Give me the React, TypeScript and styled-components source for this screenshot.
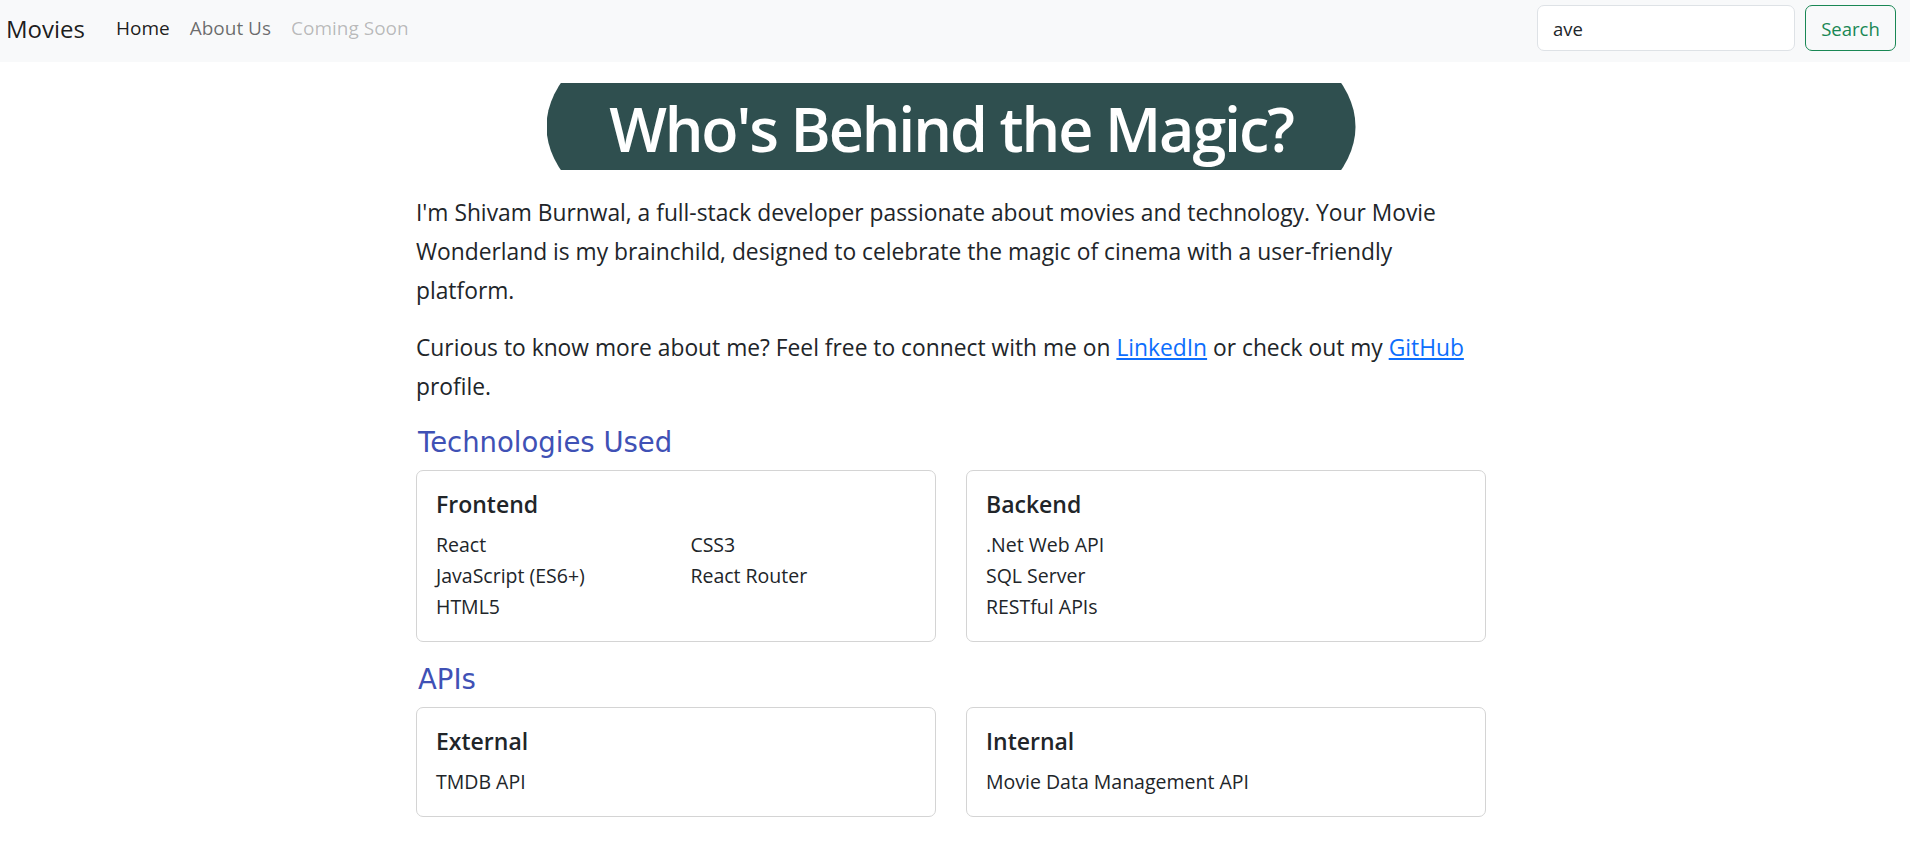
import React from "react";
import styled, { createGlobalStyle } from "styled-components";

const GlobalStyle = createGlobalStyle`
  *, *::before, *::after { box-sizing: border-box; }
  body {
    margin: 0;
    background: #ffffff;
    color: #212529;
    font-family: "Open Sans", "Noto Sans", sans-serif;
  }
`;

const NavBar = styled.nav`
  display: flex;
  align-items: center;
  justify-content: space-between;
  height: 62px;
  background: #f8f9fa;
  padding: 0 14px 0 6px;
`;

const NavLeft = styled.div`
  display: flex;
  align-items: center;
  margin-bottom: 5px;
`;

const Brand = styled.a`
  font-size: 24px;
  color: rgba(0, 0, 0, 0.9);
  text-decoration: none;
  margin-right: 21px;
  line-height: 1.5;
`;

const NavLink = styled.a<{ $state: "active" | "normal" | "disabled" }>`
  font-size: 19px;
  line-height: 1.5;
  padding: 0 10px;
  text-decoration: none;
  color: ${(p) =>
    p.$state === "active"
      ? "rgba(0,0,0,0.9)"
      : p.$state === "disabled"
      ? "rgba(0,0,0,0.27)"
      : "rgba(0,0,0,0.58)"};
`;

const SearchForm = styled.form`
  display: flex;
  gap: 10px;
  align-self: flex-start;
  margin-top: 5px;
`;

const SearchInput = styled.input`
  width: 258px;
  height: 46px;
  border: 1px solid #dee2e6;
  border-radius: 7px;
  background: #ffffff;
  padding: 0 15px;
  font-family: "Open Sans", sans-serif;
  font-size: 18.5px;
  color: #212529;
  outline: none;
`;

const SearchButton = styled.button`
  width: 91px;
  height: 46px;
  border: 1px solid #198754;
  border-radius: 7px;
  background: transparent;
  color: #198754;
  font-family: "Open Sans", sans-serif;
  font-size: 18.5px;
  padding: 0;
`;

const Container = styled.main`
  width: 1078px;
  margin: 0 auto;
  padding-right: 8px;
`;

const HeroWrap = styled.div`
  display: flex;
  justify-content: center;
  margin: 21px 0 22.5px;
`;

const Hero = styled.h1`
  width: 809px;
  height: 87px;
  margin: 0;
  padding-top: 4px;
  display: flex;
  align-items: center;
  justify-content: center;
  background: #2f4f4f;
  color: #ffffff;
  font-family: "Open Sans", sans-serif;
  font-weight: 600;
  font-size: 61px;
  letter-spacing: -2.1px;
  clip-path: ellipse(50% 190% at 50% 50%);
`;

const Para = styled.p`
  font-size: 22.8px;
  line-height: 39px;
  margin: 0 0 18.5px;
`;

const TextLink = styled.a`
  color: #0d6efd;
  text-decoration: underline;
`;

const SectionTitle = styled.h4`
  font-family: "Comic Sans MS", "DejaVu Sans", sans-serif;
  font-weight: normal;
  font-size: 27.5px;
  line-height: 34px;
  color: #3f51b5;
  margin: 0 0 11px 2px;
`;

const CardRow = styled.div`
  display: grid;
  grid-template-columns: 1fr 1fr;
  column-gap: 30px;
  margin-bottom: 20px;
`;

const Card = styled.div`
  border: 1px solid #d4d4d4;
  border-radius: 7px;
  padding: 19px;
  background: #ffffff;
`;

const CardTitle = styled.h5`
  font-size: 23px;
  font-weight: 600;
  line-height: 29px;
  margin: 0 0 10px;
  color: #212529;
`;

const ItemColumns = styled.div<{ $cols: number }>`
  display: grid;
  grid-template-columns: repeat(${(p) => p.$cols}, 1fr);
  column-gap: 28.8px;
`;

const ItemList = styled.ul`
  list-style: none;
  margin: 0;
  padding: 0;
`;

const Item = styled.li`
  font-size: 19.5px;
  line-height: 31px;
  color: #212529;
`;

type CardData = { title: string; columns: string[][] };

const InfoCard = ({ title, columns }: CardData) => (
  <Card>
    <CardTitle>{title}</CardTitle>
    <ItemColumns $cols={columns.length}>
      {columns.map((col, i) => (
        <ItemList key={i}>
          {col.map((it) => (
            <Item key={it}>{it}</Item>
          ))}
        </ItemList>
      ))}
    </ItemColumns>
  </Card>
);

export default function App() {
  return (
    <>
      <GlobalStyle />
      <NavBar>
        <NavLeft>
          <Brand href="#">Movies</Brand>
          <NavLink $state="active" href="#">Home</NavLink>
          <NavLink $state="normal" href="#">About Us</NavLink>
          <NavLink $state="disabled">Coming Soon</NavLink>
        </NavLeft>
        <SearchForm onSubmit={(e) => e.preventDefault()}>
          <SearchInput defaultValue="ave" />
          <SearchButton type="submit">Search</SearchButton>
        </SearchForm>
      </NavBar>
      <Container>
        <HeroWrap>
          <Hero>Who's Behind the Magic?</Hero>
        </HeroWrap>
        <Para>
          I'm Shivam Burnwal, a full-stack developer passionate about movies and technology. Your
          Movie Wonderland is my brainchild, designed to celebrate the magic of cinema with a
          user-friendly platform.
        </Para>
        <Para>
          Curious to know more about me? Feel free to connect with me on{" "}
          <TextLink href="#">LinkedIn</TextLink> or check out my{" "}
          <TextLink href="#">GitHub</TextLink> profile.
        </Para>
        <SectionTitle>Technologies Used</SectionTitle>
        <CardRow>
          <InfoCard
            title="Frontend"
            columns={[
              ["React", "JavaScript (ES6+)", "HTML5"],
              ["CSS3", "React Router"],
            ]}
          />
          <InfoCard title="Backend" columns={[[".Net Web API", "SQL Server", "RESTful APIs"]]} />
        </CardRow>
        <SectionTitle>APIs</SectionTitle>
        <CardRow>
          <InfoCard title="External" columns={[["TMDB API"]]} />
          <InfoCard title="Internal" columns={[["Movie Data Management API"]]} />
        </CardRow>
      </Container>
    </>
  );
}
